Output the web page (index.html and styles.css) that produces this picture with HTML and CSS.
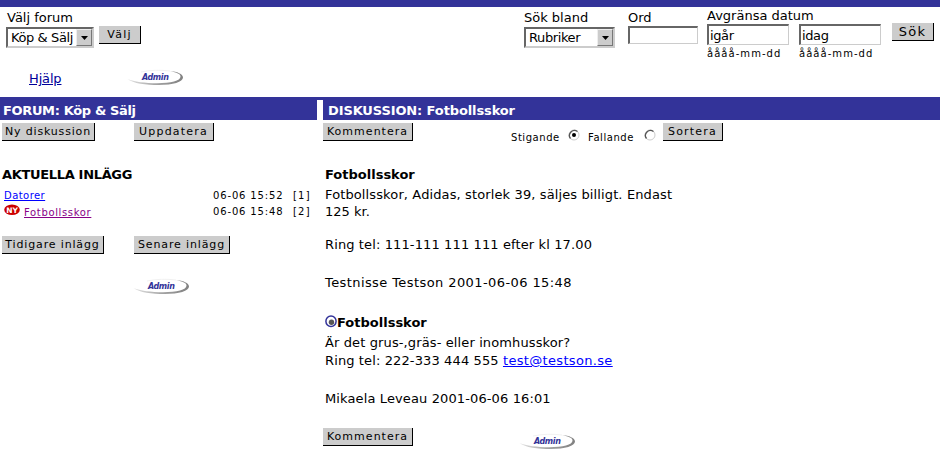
FILE: index.html
```
<!DOCTYPE html>
<html lang="sv">
<head>
<meta charset="utf-8">
<title>Forum</title>
<link rel="stylesheet" href="styles.css">
</head>
<body>
<svg width="0" height="0" class="defs"><defs>
<linearGradient id="rim" x1="0" x2="1"><stop offset="0" stop-color="#e4e4e4"/><stop offset=".5" stop-color="#a5a5a5"/><stop offset="1" stop-color="#808080"/></linearGradient>
<symbol id="swoosh" viewBox="0 0 58 18">
<path d="M.5 10C6 14.500 19 16 32 16C46 16 56 13 56 8.500C56 5 50 2.500 43 2C50 3.500 53.500 5 53.500 7.500C53.500 12 44 14.200 30 14.200C18 14.200 7 12.800 .5 10Z" fill="url(#rim)"/>
<path d="M14 3C23 1 34 .8 43 2" fill="none" stroke="#eee" stroke-width=".8"/>
</symbol></defs></svg>
<header class="top">
  <div class="field forum">
    <label class="label l-forum">Välj forum</label>
    <div class="row"><span class="select s-forum"><span class="value v-forum">Köp &amp; Sälj</span><span class="drop"><svg width="7" height="4"><path d="M0 0H7L3.500 4Z"/></svg></span></span>
    <button class="btn b-valj">Välj</button></div>
    <div class="links"><a class="help" href="#">Hjälp</a><a class="admin" href="#"><svg><use href="#swoosh"/></svg><span>Admin</span></a></div>
  </div>
  <div class="field in">
    <label class="label l-in">Sök bland</label>
    <span class="select s-in"><span class="value v-in">Rubriker</span><span class="drop"><svg width="7" height="4"><path d="M0 0H7L3.500 4Z"/></svg></span></span>
  </div>
  <div class="field word"><label class="label l-word">Ord</label><input class="input i-word" type="text"></div>
  <div class="field dates">
    <label class="label l-date">Avgränsa datum</label>
    <div class="pair">
      <div><input class="input i-date" type="text" value="igår"><span class="hint">åååå-mm-dd</span></div>
      <div><input class="input i-date" type="text" value="idag"><span class="hint">åååå-mm-dd</span></div>
    </div>
  </div>
  <button class="btn b-sok">Sök</button>
</header>
<main class="columns">
  <section class="left">
    <h1 class="bar"><span class="t-forum">FORUM: Köp &amp; Sälj</span></h1>
    <div class="actions"><button class="btn b-new">Ny diskussion</button><button class="btn b-upd">Uppdatera</button></div>
    <h2 class="head t-posts">AKTUELLA INLÄGG</h2>
    <div class="post"><a class="link t-dat" href="#">Datorer</a><span class="time">06-06 15:52</span><span class="count">[1]</span></div>
    <div class="post"><svg class="new" width="17" height="12"><ellipse cx="8" cy="5.800" rx="7.800" ry="5.300" fill="#c00"/><text x="8" y="8.500" text-anchor="middle">NY</text></svg><a class="link seen" href="#">Fotbollsskor</a><span class="time">06-06 15:48</span><span class="count">[2]</span></div>
    <div class="actions paging"><button class="btn b-prev">Tidigare inlägg</button><button class="btn b-next">Senare inlägg</button></div>
    <a class="admin a-left" href="#"><svg><use href="#swoosh"/></svg><span>Admin</span></a>
  </section>
  <section class="right">
    <h1 class="bar bar-r"><span class="t-disc">DISKUSSION: Fotbollsskor</span></h1>
    <div class="actions"><button class="btn b-com">Kommentera</button>
      <span class="sort asc">Stigande</span><svg class="radio" width="12" height="12"><circle cx="6" cy="6" r="5" fill="#fff" stroke="#ccc"/><path d="M2.500 9.500A5 5 0 0 1 9.500 2.500" fill="none" stroke="#555" stroke-width="1.300"/><circle cx="6" cy="6" r="2"/></svg>
      <span class="sort desc">Fallande</span><svg class="radio r2" width="12" height="12"><circle cx="6" cy="6" r="5" fill="#fff" stroke="#ccc"/><path d="M2.500 9.500A5 5 0 0 1 9.500 2.500" fill="none" stroke="#555" stroke-width="1.300"/></svg>
      <button class="btn b-sort">Sortera</button></div>
    <article class="message">
      <h2 class="head t-msg">Fotbollsskor</h2>
      <p class="p1">Fotbollsskor, Adidas, storlek 39, säljes billigt. Endast</p>
      <p class="p2">125 kr.</p>
      <p class="p3">Ring tel: 111-111 111 111 efter kl 17.00</p>
      <p class="p4">Testnisse Testson 2001-06-06 15:48</p>
    </article>
    <article class="message reply">
      <h2 class="head t-msg"><svg width="12" height="13"><ellipse cx="6" cy="6.300" rx="5.100" ry="5.300" fill="#fff" stroke="#339" stroke-width="1.500"/><circle cx="6.500" cy="7.200" r="2.700" fill="#555"/></svg>Fotbollsskor</h2>
      <p class="q1">Är det grus-,gräs- eller inomhusskor?</p>
      <p class="q2">Ring tel: 222-333 444 555 <a class="link mail" href="#">test@testson.se</a></p>
      <p class="q3">Mikaela Leveau 2001-06-06 16:01</p>
    </article>
    <div class="foot"><button class="btn b-com">Kommentera</button><a class="admin a-foot" href="#"><svg><use href="#swoosh"/></svg><span>Admin</span></a></div>
  </section>
</main>
</body>
</html>
```
FILE: styles.css
```
* { box-sizing: border-box; }
body { margin: 0; width: 940px; height: 452px; overflow: hidden; background: #fff; color: #000; font: 13px/18px Verdana, "DejaVu Sans", sans-serif; white-space: nowrap; }
.defs { display: block; height: 0; }
h1, h2, p { margin: 0; font-size: 13px; }
.top { display: flex; align-items: flex-start; height: 97px; border-top: 7px solid #339; }
.field { display: flex; flex-direction: column; align-items: flex-start; padding-top: 1px; }
.forum { width: 518px; padding-left: 6px; }
.in { width: 104px; margin-left: 6px; }
.word { width: 79px; }
.dates { width: 185px; padding-top: 0; }
.label { height: 18px; line-height: 20px; }
.forum .label { margin-left: 1px; }
.l-date { line-height: 18px; }
.row { display: flex; gap: 6px; }
.select { display: flex; justify-content: space-between; height: 21px; margin-top: 1px; border: 2px solid; border-color: #666 #ccc #ccc #666; background: #fff; }
.s-forum { width: 88px; margin-right: -1px; }
.s-in { width: 91px; }
.value { padding-left: 3px; line-height: 18px; letter-spacing: -.4px; }
.drop { display: flex; align-items: center; justify-content: center; width: 16px; border: 1px solid; border-color: #eee #777 #777 #eee; background: #ccc; }
.btn { flex: none; height: 18px; padding: 1px 0 0; border: 0 solid #000; border-width: 0 1px 1px 0; background: #ccc; color: #000; font: 11px/16px Verdana, "DejaVu Sans", sans-serif; letter-spacing: 1.200px; text-align: center; white-space: nowrap; }
.b-valj { width: 42px; }
.b-sok { width: 42px; height: 18px; margin-top: 16px; padding: 0; font-size: 13px; }
.input { display: block; height: 18px; padding: 0 1px; border: 2px solid; border-color: #666 #ccc #ccc #666; border-right-width: 1px; border-bottom-width: 1px; border-radius: 0; outline: 0; background: #fff; font: 13px/16px Verdana, "DejaVu Sans", sans-serif; letter-spacing: -.4px; }
.i-word { width: 70px; }
.i-date { width: 82px; height: 21px; }
.pair { display: flex; gap: 10px; margin-top: -1px; }
.hint { display: block; width: 82px; font-size: 10px; line-height: 17px; letter-spacing: 1.050px; }
.links { display: flex; align-items: flex-start; margin-top: 22px; margin-left: 23px; }
.help { width: 98px; color: #009; letter-spacing: -.15px; }
.admin { position: relative; display: block; width: 58px; height: 18px; color: #339; text-decoration: none; font: italic bold 8px/16px "DejaVu Sans", sans-serif; letter-spacing: -.4px; }
.links .admin { margin-top: -1px; }
.admin svg { display: block; width: 58px; height: 18px; }
.admin span { position: absolute; left: 15px; top: 1px; }
.columns { display: grid; grid-template-columns: 317px 1fr; column-gap: 6px; border-top: 3px solid #339; }
.bar { height: 20px; padding-left: 3px; background: #339; color: #fff; line-height: 22px; letter-spacing: -.35px; }
.bar-r { padding-left: 5px; letter-spacing: -.12px; }
.actions { display: flex; height: 22px; padding-top: 3px; }
.left .actions { padding-left: 2px; }
.b-new { width: 93px; margin-right: 39px; letter-spacing: .82px; }
.b-upd { width: 80px; }
.head { height: 18px; margin-top: 24px; font-weight: bold; line-height: 18px; }
.left .head { margin: 24px 0 4px 2px; letter-spacing: -.33px; }
.post { display: flex; height: 16px; padding-left: 4px; font-size: 10px; line-height: 16px; }
.link { color: #00f; }
.t-dat { letter-spacing: .45px; }
.seen { margin-left: 3px; color: #808; line-height: 18px; letter-spacing: .65px; }
.new { margin-top: 0; }
.new text { fill: #fff; font: bold 7.500px "DejaVu Sans", sans-serif; }
.time { width: 80px; margin-left: auto; letter-spacing: .85px; }
.count { width: 24px; letter-spacing: 1.200px; }
.paging { height: 42px; padding-top: 16px; }
.b-prev { width: 102px; margin-right: 30px; letter-spacing: .85px; }
.b-next { width: 96px; letter-spacing: .87px; }
.a-left { margin: 16px 0 0 133px; }
.b-com { width: 90px; letter-spacing: 1.020px; }
.sort { font-size: 10px; line-height: 29px; height: 20px; letter-spacing: .55px; }
.asc { width: 57px; margin-left: 98px; }
.desc { width: 56px; margin-left: 8px; }
.radio { margin-top: 6px; }
.b-sort { width: 60px; margin-left: 7px; }
.message { padding-left: 2px; }
.p1, .p3, .q1, .q2, .q3 { letter-spacing: .12px; }
.p1 { margin-top: 2px; }
.message .p2 { line-height: 15px; }
.p3 { margin-top: 17px; }
.p4 { margin-top: 20px; letter-spacing: .41px; }
.mail { letter-spacing: .33px; }
.reply .head { margin-top: 22px; }
.reply .head svg { vertical-align: -1px; }
.q1 { margin-top: 2px; }
.q3 { margin-top: 20px; }
.foot { display: flex; margin-top: 20px; }
.a-foot { margin: 5px 0 0 106px; }
```
